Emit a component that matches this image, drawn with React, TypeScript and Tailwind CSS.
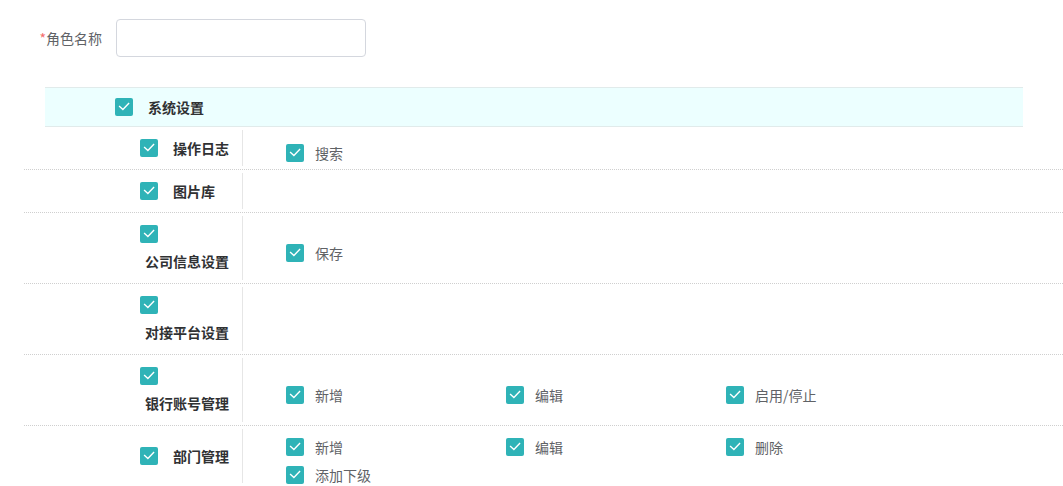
import React from "react";

const font = {
  fontFamily: '"Noto Sans CJK SC", "Noto Sans", "Liberation Sans", sans-serif',
};

function Box() {
  return (
    <span className="inline-flex w-[18px] h-[18px] shrink-0 items-center justify-center rounded-[2px] bg-[#2fb3b7]">
      <svg width="18" height="18" viewBox="0 0 18 18">
        <path d="M4.6 8.4 L7.9 11.5 L13.6 5.6" fill="none" stroke="#ffffff" strokeWidth="1.4" strokeLinecap="square" />
      </svg>
    </span>
  );
}

function Opt({ label }: { label: string }) {
  return (
    <div className="w-[220px] mt-[10px] h-[18px] flex items-center gap-[11px]">
      <Box />
      <span className="text-[14px] leading-[18px] text-[#606266]">{label}</span>
    </div>
  );
}

type Row = { name: string; long?: boolean; opts: string[] };

const rows: Row[] = [
  { name: "操作日志", opts: ["搜索"] },
  { name: "图片库", opts: [] },
  { name: "公司信息设置", long: true, opts: ["保存"] },
  { name: "对接平台设置", long: true, opts: [] },
  { name: "银行账号管理", long: true, opts: ["新增", "编辑", "启用/停止"] },
  { name: "部门管理", opts: ["新增", "编辑", "删除", "添加下级"] },
];

export default function App() {
  return (
    <div className="w-[1063px] h-[486px] overflow-hidden bg-white" style={font}>
      <div className="pt-[19px] flex items-center">
        <label className="w-[116px] pr-[14px] text-right text-[14px] leading-[20px] text-[#606266]">
          <span className="text-[#f56c6c]">*</span>角色名称
        </label>
        <div className="w-[250px] h-[38px] rounded-[4px] border border-[#d4d7de] bg-white" />
      </div>

      <div className="ml-[24px] mt-[30px]">
        <div className="ml-[21px] w-[978px] h-[40px] bg-[#ecffff] border-y border-[#e1ebeb] flex items-center pl-[70px] gap-[15px]">
          <Box />
          <span className="text-[14px] leading-[20px] font-bold text-[#303133]">系统设置</span>
        </div>

        {rows.map((r) => (
          <div key={r.name} className="flex border-b border-dotted border-[#cfcfcf]">
            <div className="w-[219px] shrink-0 flex my-[3px] border-r border-[#e6e6e6]">
              <div className="flex-1 flex items-center justify-end pr-[13px] py-[9px]">
                {r.long ? (
                  <div className="w-[89px] flex flex-col">
                    <Box />
                    <span className="mt-[8px] self-end text-[14px] leading-[20px] font-bold text-[#303133]">
                      {r.name}
                    </span>
                  </div>
                ) : (
                  <div className="w-[89px] flex items-center gap-[15px]">
                    <Box />
                    <span className="text-[14px] leading-[18px] font-bold text-[#303133] whitespace-nowrap">
                      {r.name}
                    </span>
                  </div>
                )}
              </div>
            </div>
            <div className="flex-1 flex items-center pl-[43px] py-[2px]">
              <div className="w-[660px] flex flex-wrap">
                {r.opts.map((o) => (
                  <Opt key={o} label={o} />
                ))}
              </div>
            </div>
          </div>
        ))}
      </div>
    </div>
  );
}
